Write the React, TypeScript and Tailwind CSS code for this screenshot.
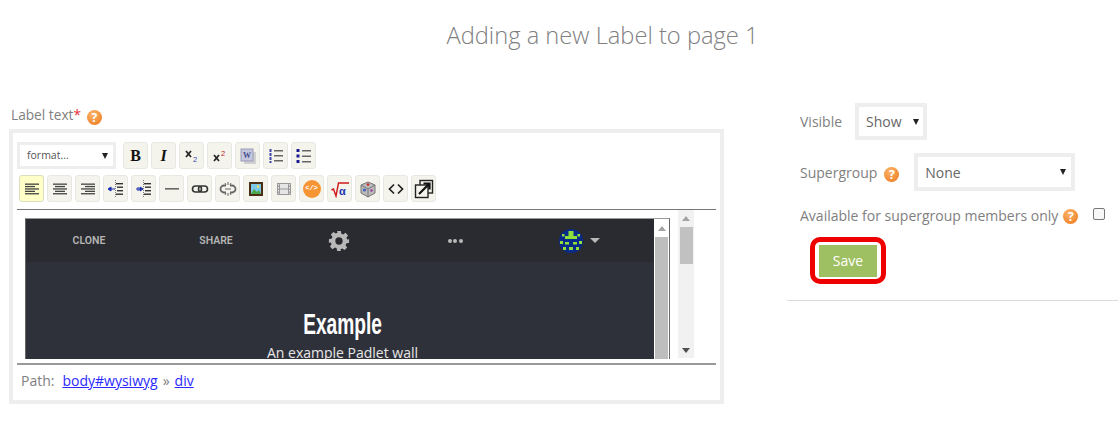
const Help = () => (
  <span className="inline-flex items-center justify-center w-[15px] h-[15px] rounded-full bg-[radial-gradient(circle_at_40%_30%,#fbb56c,#ec7516)] text-white text-[12px] font-bold leading-none">?</span>
);

const Btn = ({ children, active }: { children?: React.ReactNode; active?: boolean }) => (
  <div className={`w-[25px] h-[27px] rounded-[3px] border flex items-center justify-center ${active ? "bg-[#ffffc8] border-[#dcdcc0]" : "bg-[#f4f4ec] border-[#e8e8e2]"}`}>
    {children}
  </div>
);

const S = ({ children }: { children: React.ReactNode }) => (
  <svg width="18" height="18" viewBox="0 0 18 18" fill="none">{children}</svg>
);

const Lines = ({ rows }: { rows: [number, number][] }) => (
  <S>
    {rows.map(([x, w], i) => (
      <rect key={i} x={x} y={3.5 + i * 2.4} width={w} height="1.3" fill="#444" />
    ))}
  </S>
);

const Bold = () => <span className="text-[16px] font-bold text-[#111] leading-none font-['Liberation_Serif',serif]">B</span>;
const Ital = () => <span className="text-[16px] font-bold italic text-[#111] leading-none font-['Liberation_Serif',serif]">I</span>;
const Sub = () => (
  <svg width="18" height="18" viewBox="0 0 18 18" fill="none">
    <path d="M3 4l5 6M8 4l-5 6" stroke="#222" strokeWidth="1.7" />
    <text x="10" y="15" fontSize="7.5" fill="#3a44b0" fontFamily="Liberation Sans">2</text>
  </svg>
);
const Sup = () => (
  <svg width="18" height="18" viewBox="0 0 18 18" fill="none">
    <path d="M3 8l5 6M8 8l-5 6" stroke="#222" strokeWidth="1.7" />
    <text x="10" y="9" fontSize="7.5" fill="#c02020" fontFamily="Liberation Sans">2</text>
  </svg>
);
const Word = () => (
  <S>
    <rect x="5" y="5" width="12" height="12" fill="#d0d0d0" />
    <rect x="2" y="2" width="12" height="12" fill="#c4c6dd" stroke="#9a9ab8" />
    <text x="4" y="11" fontSize="8" fontWeight="bold" fill="#44508f" fontFamily="Liberation Serif">W</text>
  </S>
);
const OL = () => (
  <S>
    <path d="M3.5 2v14" stroke="#3a44a8" strokeWidth="2" strokeDasharray="3 1" />
    <rect x="7" y="3" width="9" height="1.5" fill="#666" />
    <rect x="7" y="8" width="9" height="1.5" fill="#666" />
    <rect x="7" y="13" width="9" height="1.5" fill="#666" />
  </S>
);
const UL = () => (
  <S>
    <rect x="1.5" y="2" width="3" height="3" fill="#1b1b90" />
    <rect x="1.5" y="7.5" width="3" height="3" fill="#1b1b90" />
    <rect x="1.5" y="13" width="3" height="3" fill="#1b1b90" />
    <rect x="7" y="3" width="9" height="1.5" fill="#666" />
    <rect x="7" y="8.5" width="9" height="1.5" fill="#666" />
    <rect x="7" y="14" width="9" height="1.5" fill="#666" />
  </S>
);
const Indent = ({ flip }: { flip?: boolean }) => (
  <S>
    <path d="M8.5 0v18" stroke="#777" strokeDasharray="1 1" />
    <rect x="9" y="3" width="7" height="1.4" fill="#333" />
    <rect x="10" y="6.5" width="6" height="1.4" fill="#333" />
    <rect x="10" y="10" width="6" height="1.4" fill="#333" />
    <rect x="9" y="13.5" width="7" height="1.4" fill="#333" />
    {flip ? <path d="M1 9h4M3 7v4M5 7l3 2-3 2z" fill="#1a2fb0" stroke="#1a2fb0" /> : <path d="M8 9H4M4 7 1 9l3 2z" fill="#1a2fb0" stroke="#1a2fb0" />}
  </S>
);
const Hr = () => <S><rect x="2" y="8" width="14" height="1.6" fill="#666" /></S>;
const LinkI = () => (
  <S>
    <rect x="1.5" y="6" width="9" height="6" rx="3" stroke="#333" strokeWidth="1.6" />
    <rect x="7.5" y="6" width="9" height="6" rx="3" stroke="#333" strokeWidth="1.6" />
  </S>
);
const Unlink = () => (
  <S>
    <path d="M7 5.5H5a3.5 3.5 0 0 0 0 7h2M11 5.5h2a3.5 3.5 0 0 1 0 7h-2" stroke="#666" strokeWidth="1.8" />
    <path d="M9 2v3M9 13v3M6 3l1 2M12 3l-1 2M6 15l1-2M12 15l-1-2M6 9h6" stroke="#666" />
  </S>
);
const Pic = () => (
  <S>
    <rect x="2" y="2" width="14" height="14" fill="#4a2f14" />
    <rect x="4" y="4" width="10" height="10" fill="#7cc8e8" />
    <path d="M4 14l3-5 3 3 2-2 2 4z" fill="#4ea84a" />
    <circle cx="11" cy="6.5" r="1.2" fill="#f5e060" />
  </S>
);
const Film = () => (
  <S>
    <rect x="2" y="3" width="14" height="12" fill="#999" />
    <rect x="5" y="4" width="8" height="4.5" fill="#e6e6e6" />
    <rect x="5" y="9.5" width="8" height="4.5" fill="#e6e6e6" />
    <path d="M3.5 4v10M14.5 4v10" stroke="#eee" strokeDasharray="1.5 1.5" />
  </S>
);
const Embed = () => (
  <span className="w-[18px] h-[18px] rounded-full bg-[#f79433] flex items-center justify-center text-white text-[7px] font-bold font-['Liberation_Mono',monospace]">&lt;/&gt;</span>
);
const Sqrt = () => (
  <S>
    <path d="M0.5 10l2-1 2.5 7 2.5-13h10.5" stroke="#d01818" strokeWidth="1.4" />
    <text x="8" y="15" fontSize="11" fill="#1a2fb0" fontWeight="bold" fontFamily="Liberation Sans">α</text>
  </S>
);
const Cube = () => (
  <S>
    <path d="M9 2l7 3v8l-7 4-7-4V5z" fill="#bbb" stroke="#777" />
    <path d="M2 5l7 4 7-4M9 9v8" stroke="#777" />
    <circle cx="9" cy="4.5" r="1.3" fill="#d02020" />
    <circle cx="5.5" cy="10" r="1.6" fill="#4060c0" />
    <circle cx="12.5" cy="10.5" r="1.3" fill="#a040a0" />
  </S>
);
const Code = () => (
  <S><path d="M7 4.5 2.5 9 7 13.5M11 4.5 15.5 9 11 13.5" stroke="#222" strokeWidth="1.7" /></S>
);
const Full = () => (
  <svg width="20" height="20" viewBox="0 0 20 20" fill="none">
    <rect x="6" y="1.5" width="12.5" height="12.5" stroke="#222" strokeWidth="1.4" />
    <rect x="1.5" y="6" width="12.5" height="12.5" fill="#f4f4ec" stroke="#222" strokeWidth="1.4" />
    <path d="M5 15 15 5M9.5 4.5h6v6" stroke="#111" strokeWidth="2.2" />
  </svg>
);

const Gear = () => (
  <svg width="22" height="22" viewBox="0 0 24 24" fill="#b9b9b9">
    <path fillRule="evenodd" d="M10 1h4l.6 3.1 1.9.8 2.6-1.8 2.8 2.8-1.8 2.6.8 1.9L23 10v4l-3.1.6-.8 1.9 1.8 2.6-2.8 2.8-2.6-1.8-1.9.8L14 23h-4l-.6-3.1-1.9-.8-2.6 1.8-2.8-2.8 1.8-2.6-.8-1.9L1 14v-4l3.1-.6.8-1.9-1.8-2.6 2.8-2.8 2.6 1.8 1.9-.8zM12 8a4 4 0 1 0 0 8 4 4 0 0 0 0-8z" />
  </svg>
);

const Avatar = () => (
  <svg width="24" height="24" viewBox="0 0 24 24">
    <circle cx="12" cy="12" r="12" fill="#0a2a8a" />
    <g fill="#8ee03a">
      <rect x="9.5" y="2" width="5" height="5" />
      <rect x="6" y="7" width="12" height="3" />
      <rect x="3" y="5" width="2.5" height="2.5" />
      <rect x="18.5" y="5" width="2.5" height="2.5" />
      <rect x="1" y="12" width="3" height="3" />
      <rect x="20" y="12" width="3" height="3" />
      <rect x="6" y="13" width="4" height="2.5" />
      <rect x="14" y="13" width="4" height="2.5" />
      <rect x="4" y="18" width="3" height="3" />
      <rect x="17" y="18" width="3" height="3" />
      <rect x="10" y="18" width="4" height="3" />
    </g>
  </svg>
);

export default function App() {
  return (
    <div className="w-[1118px] h-[447px] bg-white overflow-hidden text-[#808080] font-['Open_Sans',sans-serif]">
      <h1 className="pt-[19px] h-[64px] text-center text-[23.7px] leading-[33px] font-light text-[#808080] pl-[87px]">
        Adding a new Label to page 1
      </h1>

      <div className="flex pt-[26px]">
        {/* Left */}
        <div className="w-[787px] pl-[9px] shrink-0">
          <div className="h-[39px] pl-[2px] flex items-start gap-[6px] text-[13.7px] leading-[19px] pt-[15px]">
            <span>Label text<span className="text-[#e8303a]">*</span></span>
            <span className="mt-[5px] flex"><Help /></span>
          </div>

          <div className="w-[715px] h-[275px] border-[4px] border-[#eee] px-[4px] pt-[9px] flex flex-col">
            <div className="flex gap-[7px] h-[27px]">
              <div className="w-[99px] h-[27px] border-[3px] border-[#eee] flex items-center justify-between pl-[7px] pr-[5px] text-[10.5px] text-[#555]">
                <span>format...</span>
                <span className="w-0 h-0 border-x-[3.5px] border-x-transparent border-t-[6px] border-t-[#222]" />
              </div>
              <div className="flex gap-[3px]">
                <Btn><Bold /></Btn>
                <Btn><Ital /></Btn>
                <Btn><Sub /></Btn>
                <Btn><Sup /></Btn>
                <Btn><Word /></Btn>
                <Btn><OL /></Btn>
                <Btn><UL /></Btn>
              </div>
            </div>
            <div className="flex gap-[3px] mt-[6px] pl-[2px] h-[27px]">
              <Btn active><Lines rows={[[2, 14], [2, 10], [2, 14], [2, 10], [2, 14]]} /></Btn>
              <Btn><Lines rows={[[2, 14], [4, 10], [2, 14], [4, 10], [2, 14]]} /></Btn>
              <Btn><Lines rows={[[2, 14], [6, 10], [2, 14], [6, 10], [2, 14]]} /></Btn>
              <Btn><Indent /></Btn>
              <Btn><Indent flip /></Btn>
              <Btn><Hr /></Btn>
              <Btn><LinkI /></Btn>
              <Btn><Unlink /></Btn>
              <Btn><Pic /></Btn>
              <Btn><Film /></Btn>
              <Btn><Embed /></Btn>
              <Btn><Sqrt /></Btn>
              <Btn><Cube /></Btn>
              <Btn><Code /></Btn>
              <Btn><Full /></Btn>
            </div>

            <div className="mt-[7px] w-[699px] h-[156px] border-t border-t-[#777] border-b-2 border-b-[#999] flex pt-[8px] pb-[4px] pl-[8px]">
              <div className="w-[645px] h-[141px] border-t border-l border-r border-t-[#9a9a9a] border-l-[#666] border-r-[#666] flex">
                <div className="w-[628px] h-full bg-[#2f313a] flex flex-col overflow-hidden">
                  <div className="h-[43px] bg-[#2a2b30] flex items-center text-[#b5b5b5] text-[10.5px] font-semibold font-['Roboto',sans-serif] shrink-0">
                    <div className="w-[126px] text-center">CLONE</div>
                    <div className="w-[128px] text-center">SHARE</div>
                    <div className="w-[117px] flex justify-center"><Gear /></div>
                    <div className="w-[116px] flex justify-center gap-[1.5px]">
                      <span className="w-[4px] h-[4px] rounded-full bg-[#b9b9b9]" />
                      <span className="w-[4px] h-[4px] rounded-full bg-[#b9b9b9]" />
                      <span className="w-[4px] h-[4px] rounded-full bg-[#b9b9b9]" />
                    </div>
                    <div className="flex items-center gap-[7px] pl-[46px]">
                      <Avatar />
                      <span className="w-0 h-0 border-x-[5px] border-x-transparent border-t-[5px] border-t-[#b9b9b9]" />
                    </div>
                  </div>
                  <div className="text-center text-white pt-[43px] pl-[5px]">
                    <div className="text-[29px] leading-[38px] font-bold font-['Liberation_Sans',sans-serif] scale-x-[0.66]">Example</div>
                    <div className="text-[14px] leading-[19px] whitespace-nowrap text-[#e8e8e8]">An example Padlet wall</div>
                  </div>
                </div>
                <div className="w-[15px] h-full bg-white flex flex-col items-center">
                  <div className="h-[18px] flex items-center"><span className="w-0 h-0 border-x-[4px] border-x-transparent border-b-[5px] border-b-[#a3a3a3]" /></div>
                  <div className="w-[13px] flex-1 bg-[#bdbdbd]" />
                </div>
              </div>
              <div className="ml-[8px] -mt-[8px] w-4 h-[148px] bg-[#f1f1f1] flex flex-col items-center">
                <div className="h-[17px] flex items-center"><span className="w-0 h-0 border-x-[4px] border-x-transparent border-b-[5px] border-b-[#a3a3a3]" /></div>
                <div className="w-[13px] h-[37px] bg-[#c1c1c1]" />
                <div className="flex-1" />
                <div className="h-[16px] flex items-center"><span className="w-0 h-0 border-x-[4px] border-x-transparent border-t-[5px] border-t-[#505050]" /></div>
              </div>
            </div>

            <div className="pl-[4px] pt-[6px] text-[14px] leading-[19px] flex">
              <span className="mr-[8px]">Path:</span>
              <span className="text-[#2a2aff] underline">body#wysiwyg</span>
              <span className="mx-[5px]">»</span>
              <span className="text-[#2a2aff] underline">div</span>
            </div>
          </div>
        </div>

        {/* Right */}
        <div className="w-[331px] text-[14px] leading-[19px] pt-[13px]">
          <div className="pl-[13px] flex items-center gap-[13px] h-[37px]">
            <span>Visible</span>
            <div className="w-[72px] h-[37px] border-[4px] border-[#eee] flex items-center justify-between pl-[7px] pr-[4px] text-[#666]">
              <span>Show</span>
              <span className="w-0 h-0 border-x-[3px] border-x-transparent border-t-[6px] border-t-[#222]" />
            </div>
          </div>
          <div className="pl-[13px] flex items-center mt-[13px] h-[38px]">
            <span>Supergroup</span>
            <span className="ml-[7px] mt-[5px] flex"><Help /></span>
            <div className="ml-[15px] w-[161px] h-[38px] border-[4px] border-[#eee] flex items-center justify-between pl-[7px] pr-[5px] text-[#666]">
              <span>None</span>
              <span className="w-0 h-0 border-x-[3px] border-x-transparent border-t-[6px] border-t-[#222]" />
            </div>
          </div>
          <div className="pl-[13px] flex items-start mt-[15px] h-[22px]">
            <span>Available for supergroup members only</span>
            <span className="ml-[5px] mt-[3px] flex"><Help /></span>
            <span className="ml-[15px] mt-[2px] w-[12px] h-[12px] rounded-[2px] border border-[#777] bg-[#f8f8f8]" />
          </div>
          <div className="pl-[23px] mt-[9px]">
            <div className="w-[76px] h-[47px] border-[5px] border-[#ee0000] rounded-[10px] flex items-center justify-center">
              <div className="w-[58px] h-[32px] bg-[#9fbf63] flex items-center justify-center text-white">Save</div>
            </div>
          </div>
          <div className="mt-[16px] border-t border-[#dcdcdc]" />
        </div>
      </div>
    </div>
  );
}
